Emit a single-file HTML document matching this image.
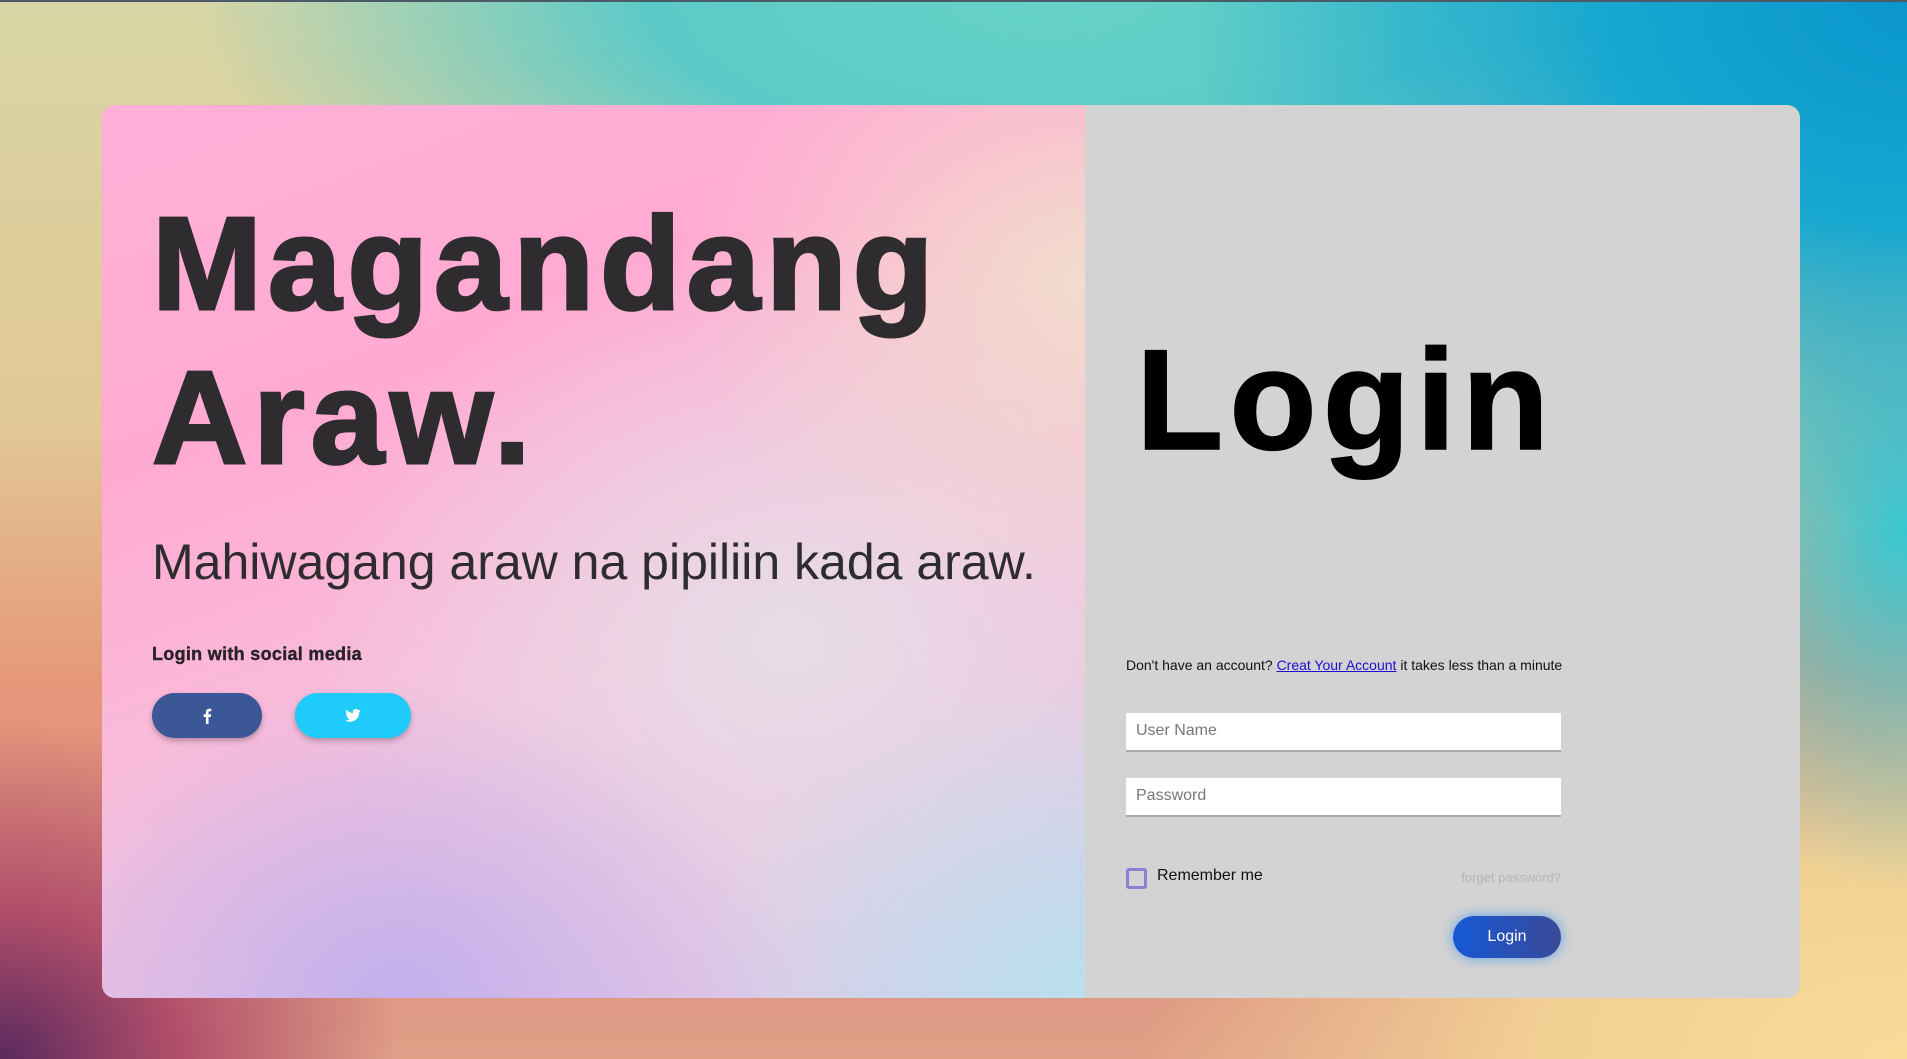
<!DOCTYPE html>
<html><head><meta charset="utf-8"><style>
*{margin:0;padding:0;box-sizing:border-box}
html,body{width:1907px;height:1059px;overflow:hidden;font-family:"Liberation Sans",Arial,sans-serif}
body{position:relative;border-top:2px solid #4a5a66;
background:
radial-gradient(ellipse 900px 650px at 100% 0%, #0a96cc 0%, #18a8d0 35%, rgba(40,180,210,0) 80%),
radial-gradient(ellipse 1000px 380px at 55% 0%, #66d2c8 0%, #5ccac8 40%, rgba(102,210,200,0) 85%),
radial-gradient(ellipse 350px 450px at 100% 50%, #38c6d2 0%, rgba(56,198,210,0) 80%),
radial-gradient(ellipse 900px 500px at 100% 100%, #f8dc98 0%, #f2d094 40%, rgba(240,208,150,0) 85%),
radial-gradient(ellipse 500px 420px at 0% 100%, #5a2a5e 0%, #b04e6a 35%, rgba(210,110,110,0) 80%),
linear-gradient(to bottom, #d8d6a6 0%, #e2c894 40%, #e6967a 65%, #dc8e80 85%, #e0a088 100%);}
.card{position:absolute;left:102px;top:103px;width:1698px;height:893px;border-radius:13px;overflow:hidden;display:flex}
.left{width:983px;height:100%;position:relative;
background:
radial-gradient(ellipse 500px 400px at 30% 100%, #c2b0ec 0%, rgba(200,180,236,0) 80%),
radial-gradient(ellipse 500px 400px at 100% 100%, #b8e0ee 0%, rgba(184,224,238,0) 80%),
radial-gradient(ellipse 500px 400px at 100% 20%, #f2dccc 0%, rgba(242,220,204,0) 80%),
radial-gradient(ellipse 600px 500px at 70% 60%, #e6dde6 0%, rgba(230,221,230,0) 80%),
linear-gradient(160deg,#ffb0d8 0%,#ffaad2 30%,#f8c0dc 60%,#dcc8e8 100%)}
.right{flex:1;background:#d3d3d3;position:relative}
h1{position:absolute;left:50px;top:82px;font-size:132px;line-height:154px;font-weight:bold;color:#2e2c2e;letter-spacing:6px;-webkit-text-stroke:3px #2e2c2e}
.sub{position:absolute;left:50px;top:428px;font-size:50px;color:#2e2c2e;white-space:nowrap}
.soc{position:absolute;left:50px;top:539px;font-size:18px;font-weight:bold;color:#2a2228;letter-spacing:.3px;-webkit-text-stroke:.4px #2a2228}
.btn{position:absolute;top:588px;height:45px;border-radius:23px;box-shadow:0 3px 6px rgba(0,0,0,.25);display:flex;align-items:center;justify-content:center;color:#fff;font-weight:bold}
.login{position:absolute;left:51px;top:224px;font-size:143px;font-weight:bold;color:#000;line-height:1;letter-spacing:6px;-webkit-text-stroke:1.5px #000}
.note{position:absolute;left:41px;top:552px;font-size:14px;color:#111;white-space:nowrap}
.note a{color:#1a0dcc;text-decoration:underline}
.inp{position:absolute;left:41px;width:435px;height:39px;background:#fff;border-bottom:2px solid #aaa;font-size:16px;color:#777;padding:9px 10px}
.cb{position:absolute;left:41px;top:763px;width:21px;height:21px;border:3px solid #8a80d0;border-radius:3px}
.rm{position:absolute;left:72px;top:762px;font-size:16px;color:#111}
.fp{position:absolute;right:239px;top:765px;font-size:13px;color:#b4b4b4}
.lb{position:absolute;left:368px;top:811px;width:108px;height:42px;border-radius:21px;background:linear-gradient(90deg,#1558d6,#3a4a98);color:#fff;font-size:16px;display:flex;align-items:center;justify-content:center;box-shadow:0 0 12px rgba(40,140,240,.7)}
</style></head><body>
<div class="card">
<div class="left">
<h1>Magandang<br>Araw.</h1>
<div class="sub">Mahiwagang araw na pipiliin kada araw.</div>
<div class="soc">Login with social media</div>
<div class="btn" style="left:50px;width:110px;background:#3b5796">
<svg width="10" height="16" viewBox="0 0 10 16"><path d="M6.5 16V9h2.3l.4-2.7H6.5V4.6c0-.8.2-1.3 1.3-1.3H9.3V.9C9 .8 8.2.7 7.3.7 5.3.7 3.9 1.9 3.9 4.2v2.1H1.6V9h2.3v7z" fill="#fff"/></svg></div>
<div class="btn" style="left:193px;width:116px;background:#1ecbfb">
<svg width="16" height="13" viewBox="0 0 24 20"><path d="M24 2.4c-.9.4-1.8.6-2.8.8 1-.6 1.8-1.6 2.2-2.7-1 .6-2 1-3.1 1.2C19.3.7 18 0 16.6 0c-2.7 0-4.9 2.2-4.9 4.9 0 .4 0 .8.1 1.1C7.7 5.8 4.1 3.9 1.7.9c-.4.7-.7 1.6-.7 2.5 0 1.7.9 3.2 2.2 4.1-.8 0-1.6-.2-2.2-.6v.1c0 2.4 1.7 4.4 3.9 4.8-.4.1-.8.2-1.3.2-.3 0-.6 0-.9-.1.6 2 2.4 3.4 4.6 3.4-1.7 1.3-3.8 2.1-6.1 2.1-.4 0-.8 0-1.2-.1C2.2 18.8 4.8 19.6 7.5 19.6c9.1 0 14-7.5 14-14v-.6c1-.7 1.8-1.6 2.5-2.6z" fill="#fff"/></svg></div>
</div>
<div class="right">
<div class="login">Login</div>
<div class="note">Don't have an account? <a>Creat Your Account</a> it takes less than a minute</div>
<div class="inp" style="top:608px">User Name</div>
<div class="inp" style="top:673px">Password</div>
<div class="cb"></div>
<div class="rm">Remember me</div>
<div class="fp">forget password?</div>
<div class="lb">Login</div>
</div>
</div>
</body></html>
